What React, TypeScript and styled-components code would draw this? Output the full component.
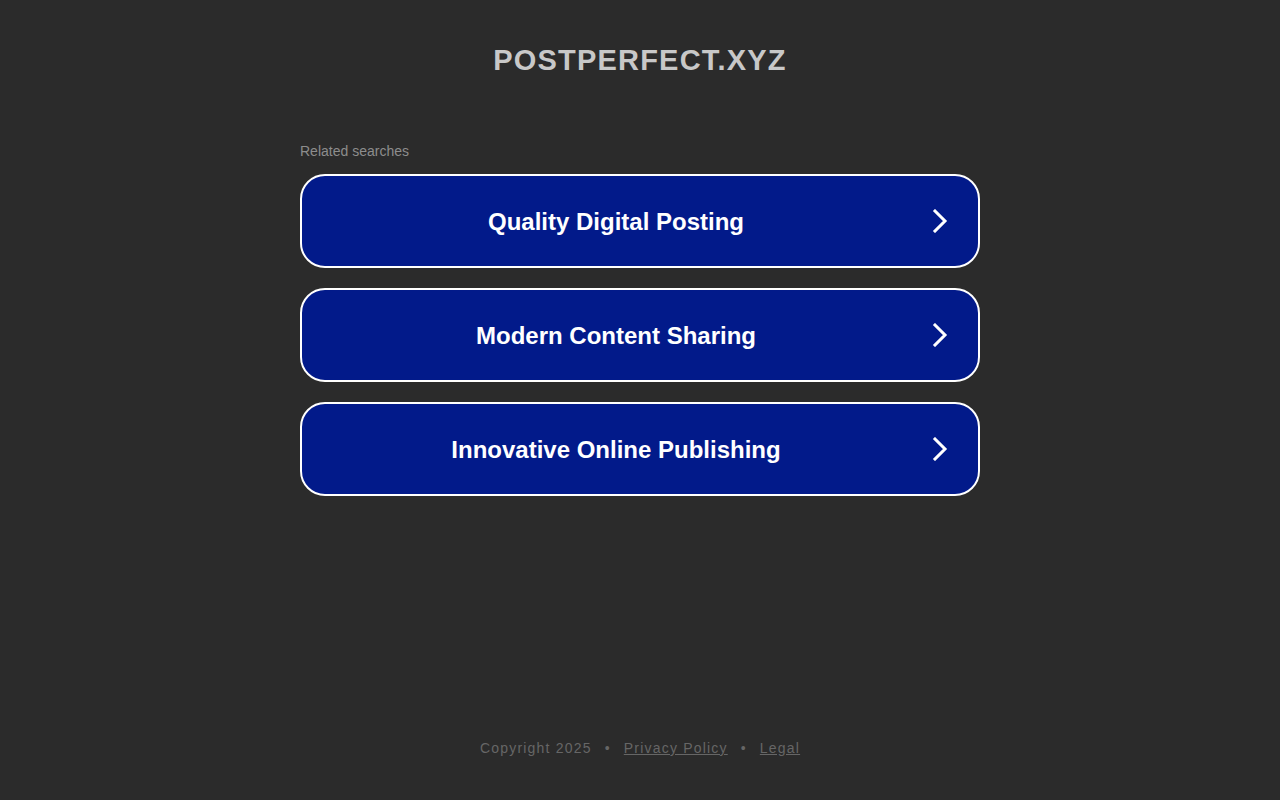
import React from 'react'
import styled, { createGlobalStyle } from 'styled-components'

const GlobalStyle = createGlobalStyle`
  html, body {
    margin: 0;
    padding: 0;
    background: #2b2b2b;
    font-family: Arial, "Liberation Sans", sans-serif;
  }
`

const Page = styled.div`
  display: flex;
  flex-direction: column;
  align-items: center;
  height: 800px;
`

const Title = styled.h1`
  margin: 42px 0 0;
  font-size: 29px;
  line-height: 36px;
  font-weight: 700;
  letter-spacing: 1.2px;
  color: #c8c8c8;
`

const Related = styled.section`
  width: 680px;
  margin-top: 65px;
  display: flex;
  flex-direction: column;
  gap: 20px;
`

const Label = styled.div`
  font-size: 14px;
  line-height: 16px;
  color: #8d8d8d;
  margin-bottom: -5px;
`

const SearchLink = styled.a`
  box-sizing: border-box;
  height: 94px;
  display: flex;
  align-items: center;
  padding-right: 28px;
  border: 2px solid #fff;
  border-radius: 25px;
  background: #021a8a;
  color: #fff;
  text-decoration: none;
  cursor: pointer;
`

const SearchText = styled.span`
  flex: 1;
  padding-top: 2px;
  text-align: center;
  font-size: 24px;
  font-weight: 700;
`

const Arrow = styled.svg`
  width: 20px;
  height: 24px;
`

const Footer = styled.footer`
  margin-top: auto;
  margin-bottom: 44px;
  font-size: 14px;
  line-height: 16px;
  letter-spacing: 1.2px;
  color: #666;
  display: flex;
  gap: 13px;
`

const FooterLink = styled.a`
  color: #666;
  text-decoration: underline;
`

const searches = ['Quality Digital Posting', 'Modern Content Sharing', 'Innovative Online Publishing']

export default function App () {
  return (
    <>
      <GlobalStyle />
      <Page>
        <Title>POSTPERFECT.XYZ</Title>
        <Related>
          <Label>Related searches</Label>
          {searches.map((s) => (
            <SearchLink key={s}>
              <SearchText>{s}</SearchText>
              <Arrow viewBox="0 0 20 24">
                <polyline points="5,2 15,12 5,22" fill="none" stroke="#fff" strokeWidth="3" strokeLinecap="square" />
              </Arrow>
            </SearchLink>
          ))}
        </Related>
        <Footer>
          <span>Copyright 2025</span>
          <span>•</span>
          <FooterLink>Privacy Policy</FooterLink>
          <span>•</span>
          <FooterLink>Legal</FooterLink>
        </Footer>
      </Page>
    </>
  )
}
